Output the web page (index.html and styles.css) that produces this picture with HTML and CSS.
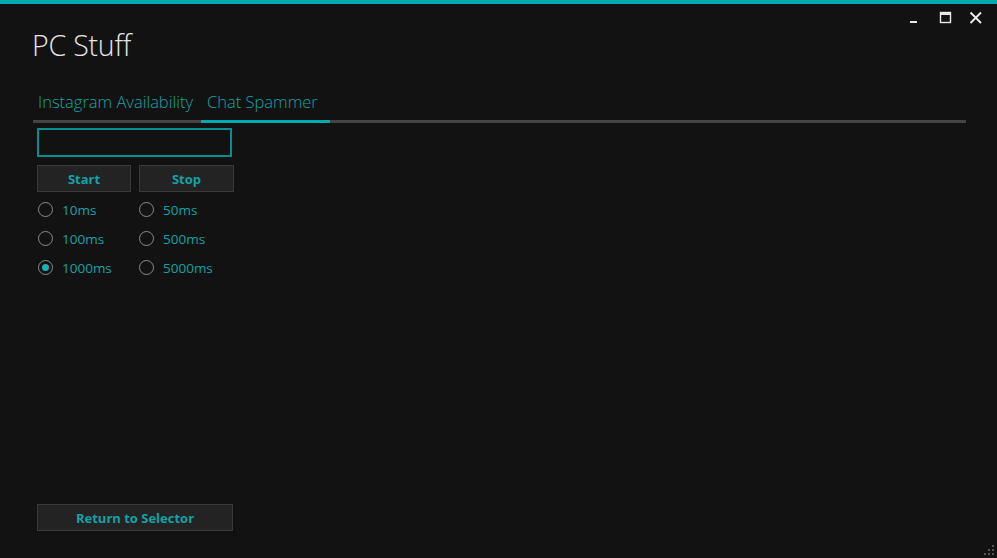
FILE: index.html
```html
<!DOCTYPE html>
<html>
<head>
<meta charset="utf-8">
<link rel="stylesheet" href="styles.css">
</head>
<body>
<div class="window">
  <header class="header">
    <h1 class="title">PC Stuff</h1>
    <div class="controls">
      <svg class="ctl" width="14" height="14" viewBox="0 0 14 14"><rect x="1" y="10" width="7" height="2" fill="#e8e8e8"/></svg>
      <svg class="ctl" width="14" height="14" viewBox="0 0 14 14"><rect x="1.5" y="1.5" width="10" height="10" fill="none" stroke="#e8e8e8" stroke-width="1.4"/><rect x="1.5" y="1.5" width="10" height="2.5" fill="#e8e8e8"/></svg>
      <svg class="ctl" width="14" height="14" viewBox="0 0 14 14"><path d="M1.5 1.5 L12 12 M12 1.5 L1.5 12" stroke="#e8e8e8" stroke-width="2"/></svg>
    </div>
  </header>
  <nav class="tabs">
    <div class="tab tab-first">Instagram Availability</div>
    <div class="tab tab-active">Chat Spammer</div>
  </nav>
  <main class="content">
    <input class="textbox" type="text">
    <div class="btn-row">
      <button class="btn">Start</button>
      <button class="btn">Stop</button>
    </div>
    <div class="radios">
      <label class="radio"><span class="dot"></span>10ms</label>
      <label class="radio"><span class="dot"></span>50ms</label>
      <label class="radio"><span class="dot"></span>100ms</label>
      <label class="radio"><span class="dot"></span>500ms</label>
      <label class="radio"><span class="dot checked"></span>1000ms</label>
      <label class="radio"><span class="dot"></span>5000ms</label>
    </div>
    <div class="spacer"></div>
    <button class="btn btn-wide">Return to Selector</button>
  </main>
  <svg class="grip" width="12" height="12" viewBox="0 0 12 12">
    <rect x="9" y="1" width="2" height="2" fill="#555"/>
    <rect x="5" y="5" width="2" height="2" fill="#555"/>
    <rect x="9" y="5" width="2" height="2" fill="#555"/>
    <rect x="1" y="9" width="2" height="2" fill="#555"/>
    <rect x="5" y="9" width="2" height="2" fill="#555"/>
    <rect x="9" y="9" width="2" height="2" fill="#555"/>
  </svg>
</div>
</body>
</html>
```
FILE: styles.css
```css
* { box-sizing: border-box; }
html, body { margin: 0; padding: 0; }
body {
  background: #121212;
  font-family: "Open Sans", "Noto Sans", sans-serif;
  width: 997px;
  height: 558px;
  overflow: hidden;
}
.window {
  position: relative;
  height: 558px;
  border-top: 4px solid #00a9ad;
  display: flex;
  flex-direction: column;
}
.header {
  display: flex;
  justify-content: space-between;
  align-items: flex-start;
  padding: 0 14px 0 32px;
}
.title {
  margin: 22px 0 0 0;
  font-weight: 300;
  font-size: 28.5px;
  line-height: 38px;
  color: #e6e6e6;
  letter-spacing: -0.2px;
}
.controls {
  display: flex;
  gap: 16px;
  margin-top: 7px;
}
.ctl { display: block; }
.tabs {
  display: flex;
  margin: 27px 31px 0 33px;
  border-bottom: 3px solid #444;
}
.tab {
  font-size: 16.5px;
  font-weight: 300;
  color: #15a3a6;
  line-height: 22px;
  padding: 0 0 7px 5px;
  margin-bottom: -3px;
  border-bottom: 3px solid transparent;
  white-space: nowrap;
}
.tab-first { width: 168px; }
.tab-active { width: 129px; border-bottom-color: #00aaae; padding-left: 6px; }
.content {
  flex: 1;
  display: flex;
  flex-direction: column;
  padding: 5px 0 27px 37px;
}
.textbox {
  width: 195px;
  height: 29px;
  background: #121212;
  border: 2px solid #0a8d91;
  outline: none;
  margin: 0;
}
.btn-row {
  display: flex;
  gap: 8px;
  margin-top: 8px;
}
.btn {
  width: 94px;
  height: 27px;
  background: #232323;
  border: 1px solid #3a3a3a;
  color: #12a2a5;
  font-family: "Open Sans", "Noto Sans", sans-serif;
  font-weight: 700;
  font-size: 13px;
  padding: 0;
  margin: 0;
}
.btn-row .btn:last-child { width: 95px; }
.btn-wide { width: 196px; }
.radios {
  display: grid;
  grid-template-columns: 101px 101px;
  grid-auto-rows: 29px;
  margin-top: 3px;
}
.radio {
  display: flex;
  align-items: center;
  gap: 9px;
  color: #12a2a5;
  font-size: 13.5px;
  padding-left: 1px;
}
.dot {
  width: 15px;
  height: 15px;
  border: 1.5px solid #8a8a8a;
  border-radius: 50%;
  display: flex;
  align-items: center;
  justify-content: center;
}
.dot.checked::after {
  content: "";
  width: 7px;
  height: 7px;
  border-radius: 50%;
  background: #1ab0b3;
}
.spacer { flex: 1; }
.grip {
  position: absolute;
  right: 2px;
  bottom: 2px;
}
```
